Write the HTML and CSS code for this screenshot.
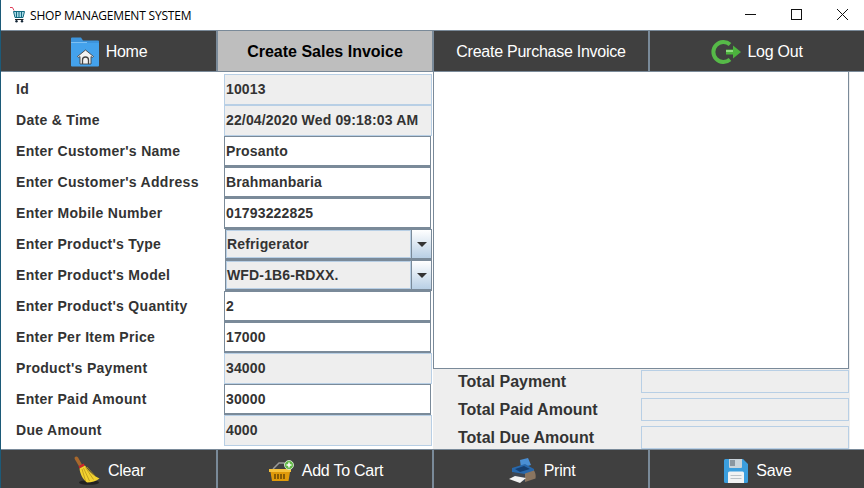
FILE: index.html
```html
<!DOCTYPE html>
<html>
<head>
    <title>Shop Management System</title>
    <link rel="stylesheet" href="styles.css">
</head>
<body>
    <div class="window">
        <div class="title-bar">
            <svg class="title-icon" width="16" height="16" viewBox="0 0 16 16">
                <path d="M0 .5h2.500l1.500 3" fill="none" stroke="#e0405a" stroke-width="1"/>
                <path d="M3.500 4.500h11l-1.500 6h-8z" fill="#a8dbe8" stroke="#146a80" stroke-width="1"/>
                <path d="M6.500 5v5M9 5v5M11.500 5v5" stroke="#146a80" stroke-width="1"/>
                <path d="M5 12.500h8.500" stroke="#222" stroke-width="1"/>
                <circle cx="6.500" cy="14.300" r="1.200" fill="#123"/>
                <circle cx="12" cy="14.300" r="1.200" fill="#123"/>
            </svg>
            <span class="title-text">SHOP MANAGEMENT SYSTEM</span>
            <div class="window-controls">
                <svg width="46" height="30" viewBox="0 0 46 30"><path d="M18 14.500h11" stroke="#111"/></svg>
                <svg width="46" height="30" viewBox="0 0 46 30"><rect x="18.500" y="9.500" width="10" height="10" fill="none" stroke="#111"/></svg>
                <svg width="46" height="30" viewBox="0 0 46 30"><path d="M18 9l11 11M29 9l-11 11" stroke="#111"/></svg>
            </div>
        </div>

        <nav class="tab-bar">
            <div class="tab">
                <svg class="tab-icon" width="30" height="30" viewBox="0 0 30 30">
                    <path d="M1 1.500a1 1 0 0 1 1-1h9l2 3h15a1 1 0 0 1 1 1v3H1z" fill="#3d94dc"/>
                    <path d="M1 6h28v22.500a1 1 0 0 1-1 1H2a1 1 0 0 1-1-1z" fill="#44a2ec"/>
                    <path d="M1 5.500h16" stroke="#7cc0f4" stroke-width="1"/>
                    <path d="M15.500 13l-8 6.500 1.200 1 1.300-1V27h11v-7.500l1.300 1 1.200-1z" fill="#f2f2f2" stroke="#444" stroke-width=".9"/>
                    <path d="M12.500 27v-4a3 3 0 0 1 6 0v4" fill="none" stroke="#444" stroke-width="1.300"/>
                </svg>
                <span>Home</span>
            </div>
            <div class="tab tab-active"><span>Create Sales Invoice</span></div>
            <div class="tab"><span>Create Purchase Invoice</span></div>
            <div class="tab">
                <svg class="tab-icon tab-icon-logout" width="31" height="24" viewBox="0 0 31 24">
                    <path d="M19 4.500A10 10 0 1 0 19 19.500" fill="none" stroke="#56b948" stroke-width="4"/>
                    <path d="M15 9.500h7V5.500l8 6.500-8 6.500v-4h-7z" fill="#4cb33e"/>
                    <path d="M15 10h7v2h-7z" fill="#8edc7e"/>
                </svg>
                <span>Log Out</span>
            </div>
        </nav>

        <main class="content">
            <section class="form-panel">
                <div class="form-row"><div class="form-label">Id</div><div class="field field-locked">10013</div></div>
                <div class="form-row"><div class="form-label">Date &amp; Time</div><div class="field field-locked">22/04/2020 Wed 09:18:03 AM</div></div>
                <div class="form-row"><div class="form-label">Enter Customer's Name</div><div class="field">Prosanto</div></div>
                <div class="form-row"><div class="form-label">Enter Customer's Address</div><div class="field">Brahmanbaria</div></div>
                <div class="form-row"><div class="form-label">Enter Mobile Number</div><div class="field">01793222825</div></div>
                <div class="form-row"><div class="form-label">Enter Product's Type</div><div class="combo"><span class="combo-value">Refrigerator</span><span class="combo-button"><i class="arrow"></i></span></div></div>
                <div class="form-row"><div class="form-label">Enter Product's Model</div><div class="combo"><span class="combo-value">WFD-1B6-RDXX.</span><span class="combo-button"><i class="arrow"></i></span></div></div>
                <div class="form-row"><div class="form-label">Enter Product's Quantity</div><div class="field">2</div></div>
                <div class="form-row"><div class="form-label">Enter Per Item Price</div><div class="field">17000</div></div>
                <div class="form-row"><div class="form-label">Product's Payment</div><div class="field field-locked">34000</div></div>
                <div class="form-row"><div class="form-label">Enter Paid Amount</div><div class="field">30000</div></div>
                <div class="form-row"><div class="form-label">Due Amount</div><div class="field field-locked">4000</div></div>
            </section>

            <section class="side-panel">
                <div class="cart-list"></div>
                <div class="totals">
                    <div class="total-row"><div class="total-label">Total Payment</div><div class="total-box"></div></div>
                    <div class="total-row"><div class="total-label">Total Paid Amount</div><div class="total-box"></div></div>
                    <div class="total-row"><div class="total-label">Total Due Amount</div><div class="total-box"></div></div>
                </div>
            </section>
        </main>

        <footer class="tab-bar tab-bar-bottom">
            <div class="tab">
                <svg class="tab-icon" width="26" height="29" viewBox="0 0 26 29">
                    <ellipse cx="15" cy="26.500" rx="10" ry="2.300" fill="#222"/>
                    <path d="M.5 2c.5-1.500 2.500-2 3.500-.5l4 7-3 1.700L1 3.500z" fill="#a8682c"/>
                    <path d="M4.500 10.500l5-3 1.200 2-5 3z" fill="#d2232a"/>
                    <path d="M5.500 12.500l5.500-3c3 5 8 10 14.500 13-3 2.500-8 4-12.500 4-4-3-7-8.500-7.500-14z" fill="#f2d230"/>
                    <path d="M8 13l3.500 12M9.500 12l6 13M11.500 11.500l8 12M13 11l8 9" stroke="#b8951a" stroke-width=".8" fill="none"/>
                </svg>
                <span>Clear</span>
            </div>
            <div class="tab">
                <svg class="tab-icon" width="25" height="22" viewBox="0 0 25 22">
                    <path d="M4 9l6-6h5l5 6" fill="none" stroke="#999" stroke-width="1.500"/>
                    <path d="M0 9h22v3h-1l-1.500 9H3L1.500 12H0z" fill="#e09a0a"/>
                    <path d="M0 9h22v3H0z" fill="#f6c23c"/>
                    <path d="M6 14v5M9 14v5M12 14v5M15 14v5" stroke="#6a4703" stroke-width="1.500"/>
                    <circle cx="20" cy="5" r="4.500" fill="#62b946" stroke="#eaf5e4" stroke-width=".8"/>
                    <path d="M17.500 5h5M20 2.500v5" stroke="#fff" stroke-width="1.500"/>
                </svg>
                <span>Add To Cart</span>
            </div>
            <div class="tab">
                <svg class="tab-icon" width="27" height="25" viewBox="0 0 27 25">
                    <path d="M11 2l8-2 3 7-10 3z" fill="#4a8fd4"/>
                    <path d="M3 10l13-4 9 5v3L14 18 3 14z" fill="#2868ac"/>
                    <path d="M6 11l9-3 6 3-10 3z" fill="#163f70"/>
                    <path d="M16 15.500l9-3c1.500 2 2 5 1.500 8L16 24z" fill="#8a7560"/>
                    <path d="M3 14l13 2v8L4 20z" fill="#3d4652"/>
                    <path d="M0 21l6-3 11 2-6 5z" fill="#f2f2f2"/>
                </svg>
                <span>Print</span>
            </div>
            <div class="tab">
                <svg class="tab-icon" width="24" height="24" viewBox="0 0 24 24">
                    <path d="M1.500 0H19l5 5v17.500a1.500 1.500 0 0 1-1.500 1.500h-21A1.500 1.500 0 0 1 0 22.500v-21A1.500 1.500 0 0 1 1.500 0z" fill="#3b9ede"/>
                    <path d="M5 0h13v8a1 1 0 0 1-1 1H6a1 1 0 0 1-1-1z" fill="#c9d3da"/>
                    <rect x="6" y="1" width="5" height="6" fill="#8a96a0"/>
                    <path d="M4 14a1.500 1.500 0 0 1 1.500-1.500h13A1.500 1.500 0 0 1 20 14v10H4z" fill="#f1f2f3"/>
                    <path d="M6.500 16.500h11M6.500 19.500h11" stroke="#bbc2c8"/>
                </svg>
                <span>Save</span>
            </div>
        </footer>
    </div>
</body>
</html>
```

FILE: styles.css
```css
* {
    box-sizing: border-box;
}
html, body {
    margin: 0;
    height: 100%;
    overflow: hidden;
    background-color: #fff;
}
.window {
    width: 864px;
    height: 488px;
    display: flex;
    flex-direction: column;
    border-left: 1px solid #1c5a78;
    font-family: "Liberation Sans", Arial, sans-serif;
    color: #333;
}
.title-bar {
    height: 30px;
    flex: none;
    display: flex;
    align-items: center;
    padding-left: 9px;
    background-color: #fff;
}
.title-icon {
    margin-right: 4px;
}
.title-text {
    font-family: "Open Sans", sans-serif;
    font-size: 12px;
    color: #000;
    letter-spacing: -0.2px;
}
.window-controls {
    margin-left: auto;
    display: flex;
    margin-right: -1px;
}
.window-controls svg {
    display: block;
}
.tab-bar {
    height: 42px;
    flex: none;
    display: grid;
    grid-template-columns: 215px 216px 216px 216px;
    background-color: #7a8a99;
    border-top: 1px solid #7a8a99;
    border-bottom: 1px solid #7a8a99;
}
.tab-bar-bottom {
    height: 39px;
    border-bottom: none;
}
.tab {
    display: flex;
    align-items: center;
    justify-content: center;
    padding-top: 2px;
    background-color: #404040;
    color: #fff;
    font-size: 16px;
    letter-spacing: -0.25px;
    border-left: 2px solid #7a8a99;
}
.tab:first-child {
    border-left: none;
}
.tab-icon {
    margin-right: 6px;
    flex: none;
}
.tab-icon-logout {
    margin-right: 5px;
}
.tab-active {
    background-color: #bebebe;
    color: #000;
    font-weight: bold;
    letter-spacing: 0;
}
.tab-bar-bottom .tab {
    padding-top: 3px;
    padding-left: 2px;
}
.tab-bar-bottom .tab-icon {
    margin-right: 8px;
}
.content {
    flex: 1;
    display: grid;
    grid-template-columns: 432px 1fr;
    min-height: 0;
}
.form-panel {
    padding: 2px 0 0 15px;
    background-color: #fff;
}
.form-row {
    display: flex;
    height: 31px;
    align-items: stretch;
}
.form-label {
    width: 208px;
    display: flex;
    align-items: center;
    padding-bottom: 2px;
    font-size: 14px;
    font-weight: bold;
    letter-spacing: 0.3px;
}
.field {
    width: 207px;
    display: flex;
    align-items: center;
    padding-left: 1px;
    font-size: 14px;
    font-weight: bold;
    letter-spacing: 0.15px;
    background-color: #fff;
    border: 1px solid #7a8a99;
    border-bottom-width: 2px;
    margin-right: 1px;
}
.field-locked {
    width: 208px;
    margin-right: 0;
    padding-bottom: 2px;
    background-color: #eee;
    border: 1px solid #b8cfe5;
}
.combo {
    width: 207px;
    margin-left: 1px;
    display: flex;
    background-color: #eee;
    border: 1px solid #7a8a99;
    border-bottom-width: 2px;
    font-size: 14px;
    font-weight: bold;
    letter-spacing: 0.15px;
}
.combo-value {
    flex: 1;
    display: flex;
    align-items: center;
    border: 1px solid #b8cfe5;
}
.combo-button {
    width: 20px;
    display: flex;
    align-items: center;
    justify-content: center;
    background: linear-gradient(#fff, #b8cfe5);
    border-left: 1px solid #7a8a99;
}
.arrow {
    width: 0;
    height: 0;
    border-left: 5px solid transparent;
    border-right: 5px solid transparent;
    border-top: 5px solid #333;
}
.side-panel {
    display: flex;
    flex-direction: column;
    width: 417px;
    background-color: #eee;
}
.cart-list {
    height: 297px;
    flex: none;
    margin-right: 1px;
    background-color: #fff;
    border: 1px solid #7a8a99;
    border-top: none;
}
.totals {
    padding: 1px 0 0 25px;
}
.total-row {
    display: flex;
    height: 28px;
    align-items: flex-start;
}
.total-label {
    width: 183px;
    height: 23px;
    display: flex;
    align-items: center;
    font-size: 16px;
    font-weight: bold;
}
.total-box {
    width: 208px;
    height: 23px;
    background-color: #eee;
    border: 1px solid #b8cfe5;
}
```
